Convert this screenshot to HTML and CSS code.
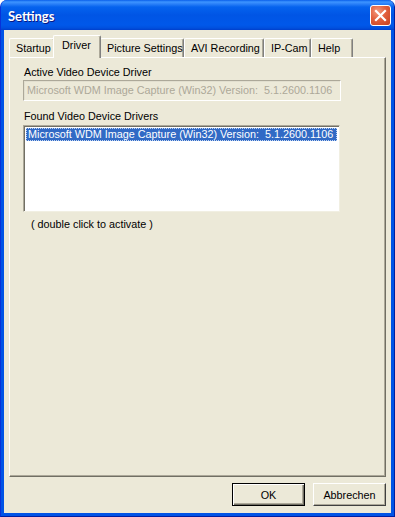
FILE: index.html
```html
<!DOCTYPE html>
<html lang="en">
<head>
    <meta charset="UTF-8">
    <title>Settings</title>
    <link rel="stylesheet" href="styles.css">
</head>
<body>
    <div class="window">
        <!-- Title bar -->
        <div class="titlebar">
            <span class="title">Settings</span>
            <button class="close" type="button" aria-label="Close">
                <svg width="13" height="13" viewBox="0 0 13 13">
                    <path d="M2 2 L11 11 M11 2 L2 11" stroke="#fff" stroke-width="2.2" stroke-linecap="square"/>
                </svg>
            </button>
        </div>

        <div class="client">
            <!-- Tabs -->
            <div class="tabs">
                <div class="tab tab-startup">Startup</div>
                <div class="tab active tab-driver">Driver</div>
                <div class="tab tab-picture">Picture Settings</div>
                <div class="tab tab-avi">AVI Recording</div>
                <div class="tab tab-ipcam">IP-Cam</div>
                <div class="tab tab-help">Help</div>
            </div>

            <div class="panel">
                <div class="label">Active Video Device Driver</div>
                <div class="textbox disabled">Microsoft WDM Image Capture (Win32) Version:&nbsp; 5.1.2600.1106</div>

                <div class="label found">Found Video Device Drivers</div>
                <div class="listbox">
                    <div class="item selected">Microsoft WDM Image Capture (Win32) Version:&nbsp; 5.1.2600.1106</div>
                </div>
                <div class="hint">( double click to activate )</div>
            </div>

            <div class="buttons">
                <button class="btn default" type="button">OK</button>
                <button class="btn" type="button">Abbrechen</button>
            </div>
        </div>
    </div>
</body>
</html>
```

FILE: styles.css
```css
html, body {
    margin: 0;
    padding: 0;
}
body {
    width: 395px;
    height: 517px;
    overflow: hidden;
    font-family: "Liberation Sans", Arial, sans-serif;
    font-size: 10.8px;
    color: #000;
}
.window {
    width: 395px;
    height: 517px;
    box-sizing: border-box;
    display: flex;
    flex-direction: column;
    background: #0053e6;
    border-left: 1px solid #0831d9;
    border-right: 1px solid #001ea0;
    border-bottom: 1px solid #001ea0;
    border-radius: 7px 7px 0 0;
    overflow: hidden;
}
.titlebar {
    height: 30px;
    flex: none;
    display: flex;
    align-items: center;
    justify-content: space-between;
    padding: 0 3px 0 7px;
    background: linear-gradient(#0a5fea 0, #3d95ff 2px, #2a80f8 4px, #0563ee 7px, #0055e5 15px, #0058ea 25px, #0050de 28px, #003fcb 30px);
}
.title {
    color: #fff;
    font-family: Lato, "Liberation Sans", sans-serif;
    font-weight: bold;
    font-size: 13px;
    text-shadow: 1px 1px #0a1883;
    margin-top: 1px;
}
.close {
    width: 21px;
    height: 21px;
    padding: 0;
    margin-top: 1px;
    border: 1px solid #fff;
    border-radius: 3px;
    background: radial-gradient(circle at 35% 30%, #f49a7e 0, #e2603d 45%, #c6401d 100%);
    display: flex;
    align-items: center;
    justify-content: center;
}
.client {
    flex: 1;
    display: flex;
    flex-direction: column;
    background: #ece9d8;
    margin: 0 3px 3px 3px;
    padding: 5px 5px 7px 5px;
}
.tabs {
    display: flex;
    align-items: flex-end;
    height: 22px;
    position: relative;
    z-index: 1;
}
.tab {
    height: 19px;
    line-height: 18px;
    box-sizing: border-box;
    padding-left: 6px;
    border-top: 1px solid #fff;
    border-left: 1px solid #fff;
    border-right: 1px solid #808080;
    box-shadow: inset -1px 0 #aca899;
    border-radius: 2px 2px 0 0;
    white-space: nowrap;
}
.tab.active {
    height: 23px;
    line-height: 19px;
    padding-left: 8px;
    margin: 0 -1px 0 -2px;
    background: #ece9d8;
    position: relative;
    top: 1px;
}
.tab-startup { width: 46px; }
.tab-driver { width: 48px; }
.tab-picture { width: 84px; }
.tab-avi { width: 80px; }
.tab-ipcam { width: 47px; }
.tab-help { width: 42px; }
.panel {
    flex: 1;
    border-top: 1px solid #fff;
    border-left: 1px solid #fff;
    border-right: 1px solid #716f64;
    border-bottom: 1px solid #716f64;
    box-shadow: inset -1px -1px #aca899;
    padding: 7px 0 0 13px;
}
.label {
    height: 14px;
    line-height: 14px;
    margin-left: 1px;
}
.label.found {
    margin-top: 8px;
}
.textbox {
    width: 318px;
    height: 21px;
    box-sizing: border-box;
    margin-top: 1px;
    border-top: 1px solid #aca899;
    border-left: 1px solid #aca899;
    border-right: 1px solid #fff;
    border-bottom: 1px solid #fff;
    box-shadow: inset 1px 1px #e2dfcf;
    padding: 3px 3px 0 3px;
    white-space: nowrap;
}
.textbox.disabled {
    color: #aca899;
}
.listbox {
    width: 317px;
    height: 87px;
    box-sizing: border-box;
    margin-top: 2px;
    background: #fff;
    border-top: 1px solid #aca899;
    border-left: 1px solid #aca899;
    border-right: 1px solid #f1efe2;
    border-bottom: 1px solid #f1efe2;
    box-shadow: inset 1px 1px #716f64;
    padding: 2px 2px 0 2px;
}
.item {
    height: 13px;
    line-height: 13px;
    padding-left: 2px;
    white-space: nowrap;
}
.item.selected {
    background: #316ac5;
    color: #fff;
    outline: 1px dotted #c0d4f4;
    outline-offset: -1px;
}
.hint {
    margin: 6px 0 0 8px;
}
.buttons {
    display: flex;
    justify-content: flex-end;
    gap: 8px;
    padding-top: 6px;
}
.btn {
    width: 73px;
    height: 23px;
    padding: 0;
    font-family: "Liberation Sans", Arial, sans-serif;
    font-size: 10.8px;
    color: #000;
    background: #ece9d8;
    border-top: 1px solid #fff;
    border-left: 1px solid #fff;
    border-right: 1px solid #404040;
    border-bottom: 1px solid #404040;
    box-shadow: inset -1px -1px #aca899;
}
.btn.default {
    border: 1px solid #000;
    box-shadow: inset 1px 1px #fff, inset -1px -1px #716f64, inset -2px -2px #aca899;
}
```
